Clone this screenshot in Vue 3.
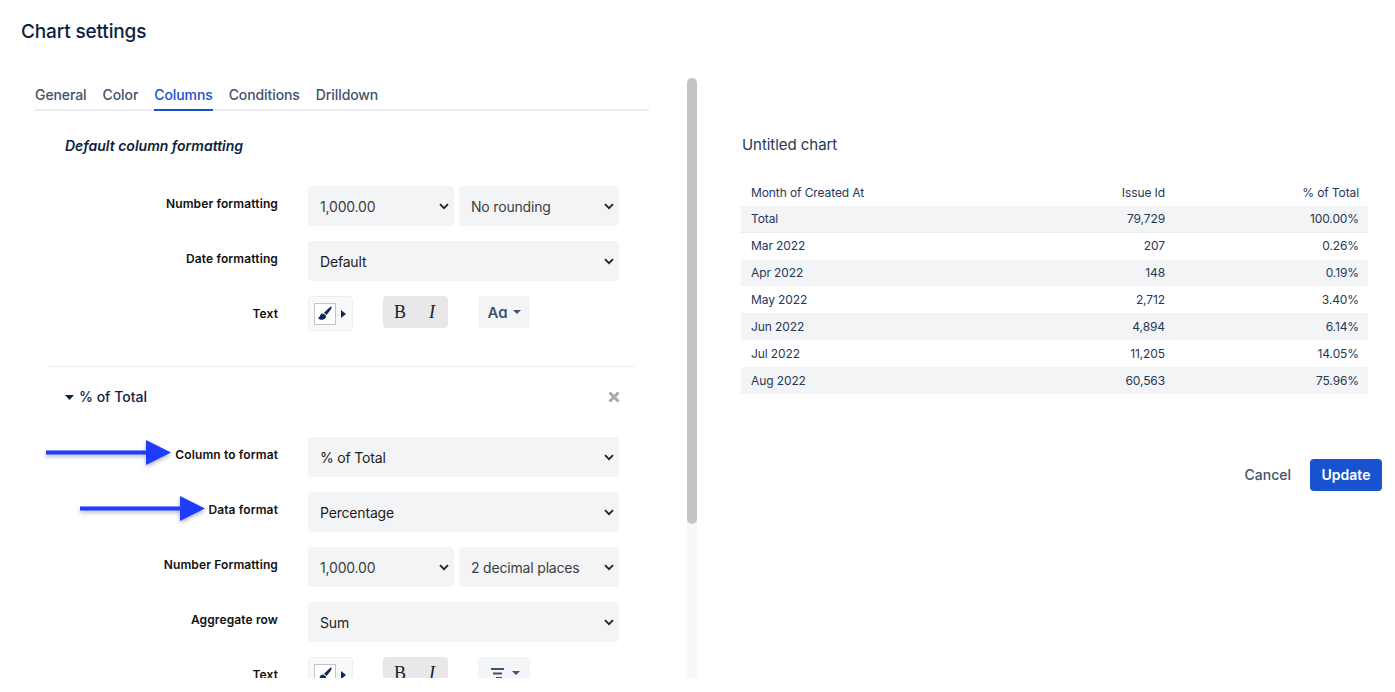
<script setup>
const tabs = ['General', 'Color', 'Columns', 'Conditions', 'Drilldown']

const defaultRows = [
  { label: 'Number formatting', selects: [{ value: '1,000.00', options: ['1,000.00'], muted: true }, { value: 'No rounding', options: ['No rounding'], muted: true }] },
  { label: 'Date formatting', selects: [{ value: 'Default', options: ['Default'] }] }
]

const columnRows = [
  { label: 'Column to format', selects: [{ value: '% of Total', options: ['% of Total'] }] },
  { label: 'Data format', selects: [{ value: 'Percentage', options: ['Percentage'] }] },
  { label: 'Number Formatting', selects: [{ value: '1,000.00', options: ['1,000.00'], muted: true }, { value: '2 decimal places', options: ['2 decimal places'], muted: true }] },
  { label: 'Aggregate row', selects: [{ value: 'Sum', options: ['Sum'] }] }
]

const tableRows = [
  { month: 'Total', id: '79,729', pct: '100.00%', shade: true, total: true },
  { month: 'Mar 2022', id: '207', pct: '0.26%' },
  { month: 'Apr 2022', id: '148', pct: '0.19%', shade: true },
  { month: 'May 2022', id: '2,712', pct: '3.40%' },
  { month: 'Jun 2022', id: '4,894', pct: '6.14%', shade: true },
  { month: 'Jul 2022', id: '11,205', pct: '14.05%' },
  { month: 'Aug 2022', id: '60,563', pct: '75.96%', shade: true }
]
</script>

<template>
  <div class="page">
    <h1 class="title">Chart settings</h1>
    <div class="body">
      <div class="left">
        <div class="form">
          <nav class="tabs">
            <span v-for="t in tabs" :key="t" class="tab" :class="{ active: t === 'Columns' }">{{ t }}</span>
          </nav>

          <h2 class="section-title">Default column formatting</h2>

          <div class="rows">
            <div v-for="r in defaultRows" :key="r.label" class="row">
              <label class="row-label">{{ r.label }}</label>
              <div class="controls">
                <div v-for="s in r.selects" :key="s.value" class="select-wrap" :class="{ first: r.selects.length > 1 && s === r.selects[0] }">
                  <select class="select" :class="{ muted: s.muted }" :value="s.value">
                    <option v-for="o in s.options" :key="o">{{ o }}</option>
                  </select>
                  <svg class="chev" viewBox="0 0 10 7" width="10" height="7"><path d="M1 1.200l4 4 4-4" fill="none" stroke="#222" stroke-width="1.800" /></svg>
                </div>
              </div>
            </div>
            <div class="row row-text">
              <label class="row-label text-label">Text</label>
              <div class="tools">
                <div class="brush-btn">
                  <span class="swatch">
                    <svg viewBox="0 0 22 22" width="20" height="20"><path d="M18.200 3c.7.7-1 3.700-3.100 6.200l-2.500 3-2.700-2.500 3.200-3c2-2 4.400-4.400 5.100-3.700z" fill="#0c2a56" /><path d="M9 10.500c-2 0-3.500 1.300-3.800 3-.2 1-.8 1.500-1.900 1.800 1 1.900 5 2.700 7.200 1.100 1.500-1 2-2.600 1.500-3.700z" fill="#0c2a56" /></svg>
                  </span>
                  <svg class="tri" viewBox="0 0 5 8" width="5" height="8"><path d="M0 0l5 4-5 4z" fill="#0c2a56" /></svg>
                </div>
                <div class="bi"><span class="b">B</span><span class="i">I</span></div>
                <div class="drop-btn">
                  <span class="aa">Aa</span>
                  <svg viewBox="0 0 8 4" width="8" height="4"><path d="M0 0h8L4 4z" fill="#42526e" /></svg>
                </div>
              </div>
            </div>
          </div>

          <hr class="divider" />

          <div class="col-head">
            <svg viewBox="0 0 9 5" width="9" height="5"><path d="M0 0h9L4.500 5z" fill="#0c2340" /></svg>
            <span class="col-name">% of Total</span>
            <svg class="close" viewBox="0 0 12 12" width="12" height="12"><path d="M1.500 1.500l9 9M10.500 1.500l-9 9" stroke="#a9a9a9" stroke-width="3" /></svg>
          </div>

          <div class="rows">
            <div v-for="r in columnRows" :key="r.label" class="row">
              <label class="row-label">{{ r.label }}</label>
              <div class="controls">
                <div v-for="s in r.selects" :key="s.value" class="select-wrap" :class="{ first: r.selects.length > 1 && s === r.selects[0] }">
                  <select class="select" :class="{ muted: s.muted }" :value="s.value">
                    <option v-for="o in s.options" :key="o">{{ o }}</option>
                  </select>
                  <svg class="chev" viewBox="0 0 10 7" width="10" height="7"><path d="M1 1.200l4 4 4-4" fill="none" stroke="#222" stroke-width="1.800" /></svg>
                </div>
              </div>
            </div>
            <div class="row row-text">
              <label class="row-label text-label">Text</label>
              <div class="tools">
                <div class="brush-btn">
                  <span class="swatch">
                    <svg viewBox="0 0 22 22" width="20" height="20"><path d="M18.200 3c.7.7-1 3.700-3.100 6.200l-2.500 3-2.700-2.500 3.200-3c2-2 4.400-4.400 5.100-3.700z" fill="#0c2a56" /><path d="M9 10.500c-2 0-3.500 1.300-3.800 3-.2 1-.8 1.500-1.900 1.800 1 1.900 5 2.700 7.200 1.100 1.500-1 2-2.600 1.500-3.700z" fill="#0c2a56" /></svg>
                  </span>
                  <svg class="tri" viewBox="0 0 5 8" width="5" height="8"><path d="M0 0l5 4-5 4z" fill="#0c2a56" /></svg>
                </div>
                <div class="bi"><span class="b">B</span><span class="i">I</span></div>
                <div class="drop-btn lines">
                  <svg viewBox="0 0 13 11" width="13" height="11"><path d="M0 1h13M2 5.500h9M5 10h6" stroke="#42526e" stroke-width="1.800" fill="none" /></svg>
                  <svg viewBox="0 0 8 4" width="8" height="4"><path d="M0 0h8L4 4z" fill="#42526e" /></svg>
                </div>
              </div>
            </div>
          </div>

          <svg class="arrow arrow-1" viewBox="0 0 126 26" width="126" height="26"><path d="M0 10.500h100V0l25 12.500L100 25V14.500H0z" fill="#1f3bff" /></svg>
          <svg class="arrow arrow-2" viewBox="0 0 126 26" width="126" height="26"><path d="M0 10.500h100V0l25 12.500L100 25V14.500H0z" fill="#1f3bff" /></svg>
        </div>
        <div class="track"><div class="thumb"></div></div>
      </div>

      <div class="right">
        <h3 class="chart-title">Untitled chart</h3>
        <div class="table">
          <div class="t-row">
            <span>Month of Created At</span><span class="num">Issue Id</span><span class="num">% of Total</span>
          </div>
          <div v-for="r in tableRows" :key="r.month" class="t-row" :class="{ shade: r.shade, total: r.total }">
            <span>{{ r.month }}</span><span class="num">{{ r.id }}</span><span class="num">{{ r.pct }}</span>
          </div>
        </div>
        <div class="actions">
          <button class="cancel">Cancel</button>
          <button class="update">Update</button>
        </div>
      </div>
    </div>
  </div>
</template>

<style>
html, body { background: #fff; overflow: hidden; }
</style>

<style scoped>
.page {
  width: 1395px;
  height: 692px;
  font-family: Inter, "Liberation Sans", sans-serif;
  color: #091e42;
  overflow: hidden;
}
.title {
  margin: 0;
  height: 78px;
  padding: 20px 0 0 21px;
  box-sizing: border-box;
  font-size: 19px;
  line-height: 24px;
  font-weight: 500;
  letter-spacing: -0.15px;
  color: #0c2340;
}
.body { display: flex; }
.left {
  display: flex;
  width: 697px;
  height: 600px;
  overflow: hidden;
  flex: none;
}
.form {
  position: relative;
  width: 687px;
  height: 600px;
  padding-left: 35px;
  box-sizing: border-box;
  overflow: hidden;
}
.tabs {
  display: flex;
  gap: 16px;
  width: 614px;
  height: 33px;
  border-bottom: 2px solid #ebecf0;
  box-sizing: border-box;
  padding-top: 8px;
}
.tab {
  font-size: 14px;
  line-height: 18px;
  font-weight: 500;
  letter-spacing: -0.09px;
  color: #42526e;
  height: 25px;
  box-sizing: border-box;
}
.tab.active {
  color: #1553cf;
  border-bottom: 2px solid #1553cf;
}
.section-title {
  margin: 26px 0 31px 30px;
  font-size: 14px;
  line-height: 18px;
  font-weight: 600;
  font-style: italic;
  color: #0c2340;
  height: 18px;
}
.rows { display: flex; flex-direction: column; gap: 15px; }
.row {
  display: flex;
  align-items: flex-start;
  margin-left: -35px;
}
.row-label {
  width: 278px;
  flex: none;
  text-align: right;
  font-size: 12px;
  line-height: 16px;
  font-weight: 600;
  letter-spacing: 0.12px;
  color: #111;
  padding-top: 10px;
}
.controls {
  margin-left: 30px;
  width: 311px;
  display: flex;
  gap: 5px;
}
.select-wrap {
  position: relative;
  flex: 1 1 0;
  min-width: 0;
}
.select-wrap.first { flex: 0 0 146px; }
.select {
  appearance: none;
  -webkit-appearance: none;
  display: block;
  width: 100%;
  height: 40px;
  border: 0;
  border-radius: 4px;
  background: #f3f4f6;
  padding: 1px 0 0 12px;
  font-family: Inter, "Liberation Sans", sans-serif;
  font-size: 14px;
  letter-spacing: -0.18px;
  color: #1c1c1c;
}
.select.muted { color: #3d3d3d; }
.chev {
  position: absolute;
  right: 5px;
  top: 17px;
  pointer-events: none;
}
.tools {
  margin-left: 30px;
  display: flex;
  align-items: flex-start;
}
.brush-btn {
  width: 45px;
  height: 35px;
  border: 1px solid #eeeeee;
  border-radius: 4px;
  background: #f9f9fa;
  box-sizing: border-box;
  display: flex;
  align-items: center;
  padding-left: 5px;
  gap: 5px;
}
.swatch {
  width: 22px;
  height: 22px;
  border: 1px solid #c4c4c4;
  background: #fff;
  box-sizing: border-box;
  display: flex;
  align-items: center;
  justify-content: center;
}
.bi {
  margin-left: 30px;
  width: 65px;
  height: 32px;
  background: #e8e8e8;
  border-radius: 4px;
  display: flex;
  align-items: center;
  font-family: "Liberation Serif", serif;
  font-size: 18px;
  color: #172033;
}
.b { width: 34px; text-align: center; }
.i { width: 30px; text-align: center; font-style: italic; }
.drop-btn {
  margin-left: 30px;
  width: 52px;
  height: 32px;
  background: #f4f5f7;
  border-radius: 4px;
  display: flex;
  align-items: center;
  justify-content: center;
  gap: 5px;
}
.drop-btn.lines { gap: 8px; padding-left: 2px; box-sizing: border-box; }
.aa {
  font-size: 15px;
  font-weight: 600;
  font-feature-settings: "cv11";
  color: #42526e;
}
.divider {
  margin: 35px 0 0 14px;
  width: 585px;
  border: 0;
  border-top: 1px solid #ebecf0;
  height: 0;
}
.col-head {
  position: relative;
  display: flex;
  align-items: center;
  gap: 5px;
  height: 18px;
  margin: 21px 0 31px 30px;
  width: 555px;
}
.col-name {
  font-size: 14px;
  line-height: 18px;
  font-weight: 500;
  color: #0c2340;
}
.close {
  position: absolute;
  right: 0;
  top: 3px;
}
.arrow {
  position: absolute;
  filter: drop-shadow(0 2px 2px rgba(20, 30, 90, 0.35));
}
.arrow-1 { left: 46px; top: 362px; }
.arrow-2 { left: 80px; top: 418px; }
.track {
  width: 10px;
  height: 600px;
  background: #f8f8f8;
  flex: none;
}
.thumb {
  height: 446px;
  width: 10px;
  background: #c5c5c5;
  border-radius: 5px;
}
.right {
  margin-left: 44px;
  width: 641px;
}
.chart-title {
  margin: 57px 0 0 1px;
  font-size: 15px;
  line-height: 20px;
  font-weight: 400;
  letter-spacing: -0.05px;
  color: #253858;
  height: 20px;
}
.table {
  margin-top: 24px;
  width: 627px;
  font-size: 12px;
  letter-spacing: -0.1px;
  color: #253858;
}
.t-row {
  display: grid;
  grid-template-columns: 220px 194px 194px;
  padding: 0.6px 9px 0 10px;
  height: 26.860px;
  align-items: center;
  box-sizing: border-box;
  line-height: 16px;
}
.num { text-align: right; }
.shade { background: #f3f4f6; }
.total { border-bottom: 1px solid #ebecf0; }
.actions {
  margin-top: 65px;
  display: flex;
  justify-content: flex-end;
  align-items: center;
  gap: 19px;
}
.cancel, .update {
  border: 0;
  font-family: Inter, "Liberation Sans", sans-serif;
  font-size: 14px;
  font-weight: 500;
  padding: 0;
  background: none;
}
.cancel { color: #42526e; }
.update {
  width: 72px;
  height: 32px;
  border-radius: 4px;
  background: #1853cf;
  color: #fff;
  font-weight: 600;
}
</style>
